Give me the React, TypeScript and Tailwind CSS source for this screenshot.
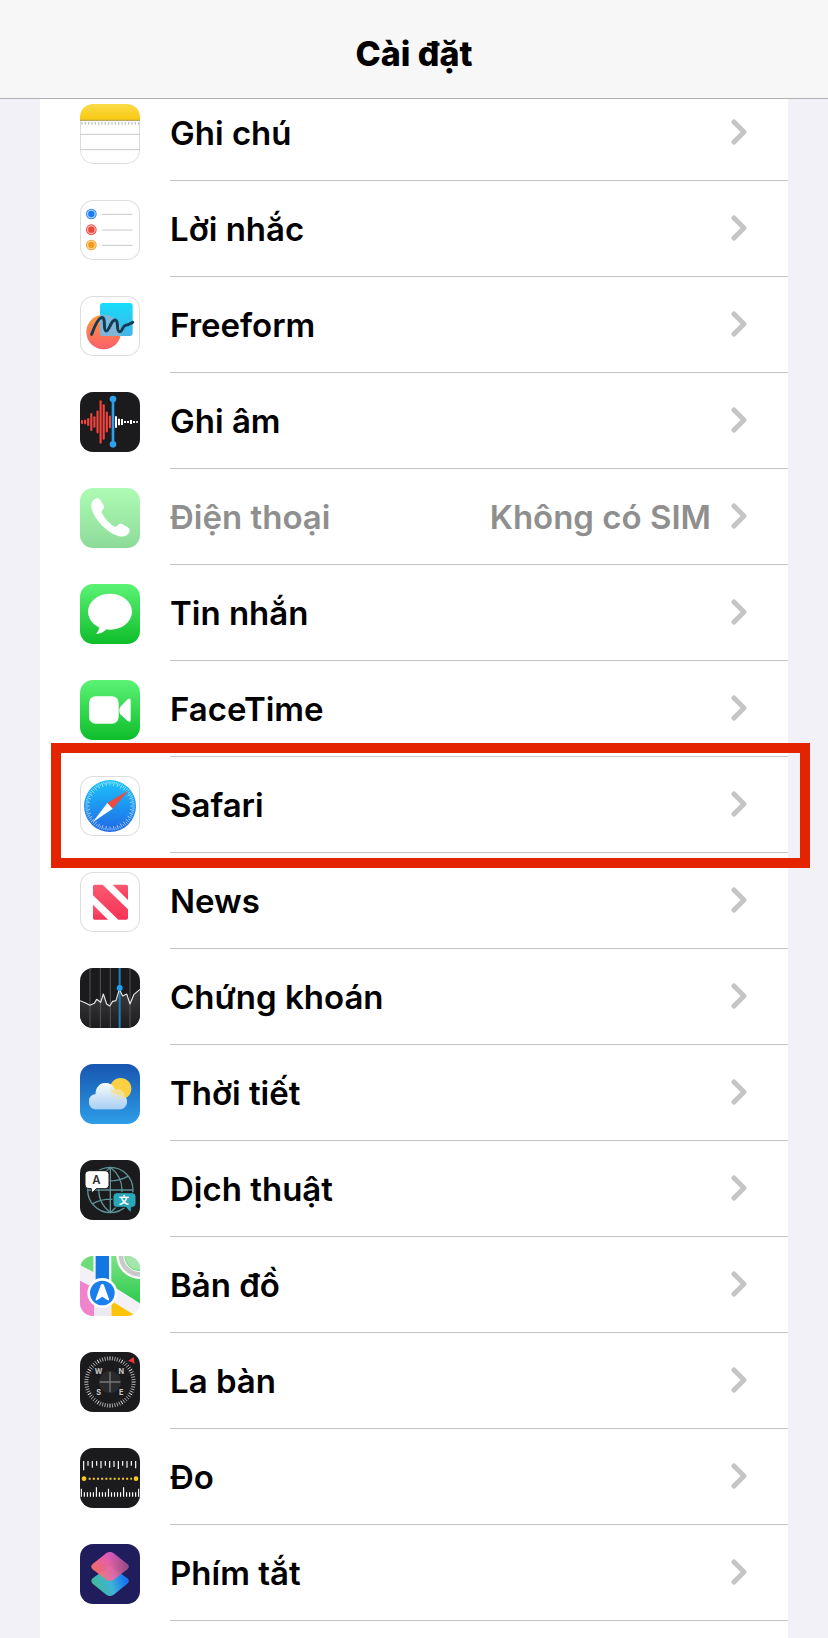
import type { ReactNode } from "react";

function Tile({ children, outlined = false }: { children: ReactNode; outlined?: boolean }) {
  return (
    <svg
      viewBox="0 0 180 180"
      aria-hidden="true"
      className={
        outlined
          ? "mt-0.5 size-[60px] shrink-0 rounded-[13px] bg-white shadow-[inset_0_0_0_1px_#dedede]"
          : "mt-0.5 size-[60px] shrink-0 rounded-[13px]"
      }
    >
      {children}
    </svg>
  );
}

function Gradient({ id, from, to }: { id: string; from: string; to: string }) {
  return (
    <linearGradient id={id} x1="0" y1="0" x2="0" y2="1">
      <stop offset="0" stopColor={from} />
      <stop offset="1" stopColor={to} />
    </linearGradient>
  );
}

const range = (n: number) => Array.from({ length: n }, (_, i) => i);

function NotesIcon() {
  return (
    <Tile>
      <defs><Gradient id="notes" from="#fbdb4a" to="#f8c90f" /></defs>
      <rect x="1.5" y="1.5" width="177" height="177" rx="38" fill="#fff" stroke="#dcdcdc" strokeWidth="3" />
      <path d="M0 48V38C0 14 14 0 38 0h104c24 0 38 14 38 38v10z" fill="url(#notes)" />
      <path d="M0 49h180" stroke="#bda95c" strokeWidth="4" />
      <path d="M4 58h176" stroke="#c4c4c4" strokeWidth="8" strokeDasharray="4 6" />
      <path d="M0 91h180M0 137h180" stroke="#c8c8c8" strokeWidth="3" />
    </Tile>
  );
}

function RemindersIcon() {
  const items = [
    { y: 42, c: "#1b7df3", l: "#a9d0fb" },
    { y: 89, c: "#ee453f", l: "#f9b5b2" },
    { y: 135, c: "#f59a1d", l: "#fbd6a1" },
  ];
  return (
    <Tile outlined>
      {items.map((i) => (
        <g key={i.y}>
          <circle cx="34" cy={i.y} r="16" fill={i.c} />
          <circle cx="34" cy={i.y} r="11.5" fill="none" stroke={i.l} strokeWidth="4" />
          <path d={`M66 ${i.y + 1}h92`} stroke="#c9c9c9" strokeWidth="3" />
        </g>
      ))}
    </Tile>
  );
}

function FreeformIcon() {
  return (
    <Tile outlined>
      <defs>
        <Gradient id="ffc" from="#ff9a3c" to="#fa5f6c" />
        <Gradient id="ffs" from="#17dcfb" to="#43b4e6" />
        <clipPath id="ffclip"><rect x="60" y="21" width="98" height="99" rx="9" /></clipPath>
      </defs>
      <circle cx="71" cy="108" r="52" fill="url(#ffc)" />
      <rect x="60" y="21" width="98" height="99" rx="9" fill="url(#ffs)" />
      <circle cx="71" cy="108" r="52" fill="#8fb4d3" opacity=".8" clipPath="url(#ffclip)" />
      <path
        d="M35 115C42 96 52 68 64 65C80 62 68 104 78 105C88 106 92 73 105 72C118 72 107 107 119 107C127 107 128 90 136 88C144 88 150 84 158 79"
        fill="none" stroke="#123c56" strokeWidth="9" strokeLinecap="round" strokeLinejoin="round"
      />
    </Tile>
  );
}

function VoiceIcon() {
  const red = [3, 4, 9, 24, 14, 31, 62, 50, 28, 16];
  const white = [17, 10, 9, 3, 3, 6, 3, 2];
  return (
    <Tile>
      <rect width="180" height="180" fill="#1b1b1d" />
      {red.map((h, i) => (
        <path key={i} d={`M${6 + i * 9.3} ${90 - h}v${h * 2}`} stroke="#f0443c" strokeWidth="6.500" strokeLinecap="round" />
      ))}
      {white.map((h, i) => (
        <path key={i} d={`M${108 + i * 9} ${90 - h}v${h * 2}`} stroke="#fff" strokeWidth="6" />
      ))}
      <path d="M99 22v134" stroke="#2f9fe8" strokeWidth="8" />
      <circle cx="99" cy="21" r="10" fill="#2f9fe8" />
      <circle cx="99" cy="157" r="10" fill="#2f9fe8" />
    </Tile>
  );
}

function PhoneIcon() {
  return (
    <Tile>
      <defs><Gradient id="phone" from="#aefbb4" to="#8ddb99" /></defs>
      <rect width="180" height="180" fill="url(#phone)" />
      <path
        d="M46 32C34 38 31 51 36 66C46 98 82 132 108 142C126 149 142 146 148 132C151 125 148 121 142 117L128 109C121 106 117 108 112 113C108 117 104 116 99 113C86 105 74 91 66 76C64 71 65 68 68 65C73 60 73 56 70 50L61 36C57 30 51 30 46 32Z"
        fill="#fff"
      />
    </Tile>
  );
}

function MessagesIcon() {
  return (
    <Tile>
      <defs><Gradient id="msg" from="#5cf375" to="#0ebd2a" /></defs>
      <rect width="180" height="180" fill="url(#msg)" />
      <ellipse cx="90" cy="83" rx="66" ry="54" fill="#fff" />
      <path d="M54 120C60 132 56 142 48 149C62 149 73 143 80 134Z" fill="#fff" />
    </Tile>
  );
}

function FaceTimeIcon() {
  return (
    <Tile>
      <defs><Gradient id="ft" from="#5cf375" to="#0ebd2a" /></defs>
      <rect width="180" height="180" fill="url(#ft)" />
      <rect x="27" y="49" width="89" height="82" rx="20" fill="#fff" />
      <path d="M121 80L143 58Q152 52 152 62V120Q152 129 143 123L121 103Q118 99 118 91.500Q118 84 121 80Z" fill="#fff" />
    </Tile>
  );
}

function SafariIcon() {
  return (
    <Tile outlined>
      <defs><Gradient id="saf" from="#1cc3fb" to="#1f68e6" /></defs>
      <circle cx="90" cy="90" r="78" fill="url(#saf)" />
      {range(72).map((i) => (
        <path
          key={i}
          d={i % 2 ? "M90 16v7" : "M90 16v13"}
          stroke="#fff" strokeOpacity=".8" strokeWidth="2"
          transform={`rotate(${i * 5} 90 90)`}
        />
      ))}
      <path d="M146 43L82 81L98 98Z" fill="#ef4a3f" />
      <path d="M38 139L82 81L98 98Z" fill="#fff" />
    </Tile>
  );
}

function NewsIcon() {
  return (
    <Tile outlined>
      <defs><Gradient id="news" from="#fa5a72" to="#f63256" /></defs>
      <g fill="url(#news)">
        <path d="M44 38H68L144 112V138Q144 143 139 143H115L39 70V43Q39 38 44 38Z" />
        <path d="M98 38H139Q144 38 144 43V84Z" />
        <path d="M39 98L84 143H44Q39 143 39 138Z" />
      </g>
    </Tile>
  );
}

function StocksIcon() {
  return (
    <Tile>
      <defs><Gradient id="stk" from="#3d3d40" to="#1c1c1e" /></defs>
      <rect width="180" height="180" fill="#1b1b1d" />
      <path d="M0 98L15 104L30 112L43 106L50 94L62 103L70 78L80 108L89 114L98 100L108 98L118 64L128 84L140 78L150 108L162 79L180 64V180H0Z" fill="url(#stk)" />
      <path d="M30 0v180M61 0v180M91 0v180M150 0v180" stroke="#626264" strokeWidth="2.500" />
      <path d="M119 0v180" stroke="#1f7fb8" strokeWidth="6" />
      <path
        d="M0 98L15 104L30 112L43 106L50 94L62 103L70 78L80 108L89 114L98 100L108 98L118 64L128 84L140 78L150 108L162 79L180 64"
        fill="none" stroke="#e4e4e4" strokeWidth="3.500" strokeLinejoin="round"
      />
      <circle cx="119" cy="60" r="9" fill="#1ba0f2" />
    </Tile>
  );
}

const CLOUD =
  "M50 136C35 136 27 126 27 113C27 100 36 91 47 91C46 71 60 57 76 57C90 57 100 65 105 77C122 74 135 84 134 98C140 102 142 108 141 115C140 128 131 136 120 136Z";

function WeatherIcon() {
  return (
    <Tile>
      <defs>
        <Gradient id="sky" from="#1755b0" to="#2e9ee8" />
        <linearGradient id="cloud" gradientUnits="userSpaceOnUse" x1="90" y1="57" x2="90" y2="136">
          <stop offset="0" stopColor="#f8fbff" />
          <stop offset="1" stopColor="#a8cff2" />
        </linearGradient>
        <clipPath id="cloudclip"><path d={CLOUD} /></clipPath>
      </defs>
      <rect width="180" height="180" fill="url(#sky)" />
      <circle cx="122" cy="74" r="32" fill="#fbd043" />
      <path d={CLOUD} fill="url(#cloud)" />
      <circle cx="122" cy="74" r="32" fill="#f9dd80" opacity=".85" clipPath="url(#cloudclip)" />
      <path d="M50 136C35 136 27 126 27 113C27 100 36 91 47 91C46 71 60 57 76 57C90 57 100 65 105 77Q96 79 92 84Q124 92 134 104Q142 126 120 136Z" fill="url(#cloud)" opacity=".7" />
    </Tile>
  );
}

function TranslateIcon() {
  return (
    <Tile>
      <rect width="180" height="180" fill="#1b1b1d" />
      <g fill="none" stroke="#5d9297" strokeWidth="4">
        <circle cx="91" cy="90" r="68" />
        <path d="M91 22v136M23 90h136M91 22C66 42 56 66 56 90S66 138 91 158M91 22C116 42 126 66 126 90S116 138 91 158M38 49Q91 76 144 49M38 131Q91 104 144 131" />
      </g>
      <path d="M27 32H76Q87 32 87 43V76Q87 86 76 86H49Q43 94 36 98Q34 92 34 86H27Q15 86 15 75V43Q15 32 27 32Z" fill="#fff" stroke="#1b1b1d" strokeWidth="3" />
      <text x="49" y="71" textAnchor="middle" fontFamily="Inter, sans-serif" fontWeight="600" fontSize="34" fill="#303030">A</text>
      <path d="M110 98H157Q168 98 168 109V132Q168 142 157 142H154V158Q144 152 138 142H110Q99 142 99 132V109Q99 98 110 98Z" fill="#2aa7b9" stroke="#1b1b1d" strokeWidth="3" />
      <text x="132" y="132" textAnchor="middle" fontFamily="'Noto Sans CJK SC', sans-serif" fontWeight="700" fontSize="31" fill="#fff">文</text>
    </Tile>
  );
}

function MapsIcon() {
  return (
    <Tile>
      <defs><Gradient id="mapg" from="#7de184" to="#2ccb4d" /></defs>
      <rect width="180" height="180" fill="#f3f1f5" />
      <path d="M0 0H40V48L0 27Z" fill="#6edc79" />
      <path d="M94 0H180V142L94 88Z" fill="url(#mapg)" />
      <circle cx="180" cy="-2" r="59" fill="none" stroke="#fff" strokeWidth="24" />
      <circle cx="180" cy="-2" r="57" fill="none" stroke="#c9c9cb" strokeWidth="14" />
      <circle cx="180" cy="-2" r="44" fill="#a5e6ad" />
      <path d="M0 74L43 96V180H0Z" fill="#f084cc" />
      <path d="M94 134L168 180H94Z" fill="#fcc30b" />
      <rect x="47" y="0" width="40" height="90" fill="#1277e0" />
      <path d="M43 140h51v40H43z" fill="#eceaf0" />
      <circle cx="67" cy="111" r="45" fill="#fff" />
      <circle cx="67" cy="111" r="37" fill="#1a7fee" />
      <path d="M67 83Q70 83 72 88L87 129Q89 136 82 132L67 122L52 132Q45 136 47 129L62 88Q64 83 67 83Z" fill="#fff" />
    </Tile>
  );
}

function CompassIcon() {
  const letters = [
    { t: "W", x: 56, y: 65 },
    { t: "N", x: 124, y: 65 },
    { t: "S", x: 56, y: 129 },
    { t: "E", x: 124, y: 129 },
  ];
  return (
    <Tile>
      <rect width="180" height="180" fill="#1b1b1d" />
      {range(60).map((i) => (
        <path key={i} d="M90 13v12" stroke="#fff" strokeOpacity={i % 5 ? 0.7 : 1} strokeWidth="2.500" transform={`rotate(${i * 6} 90 90)`} />
      ))}
      <circle cx="90" cy="90" r="33" fill="#2a2a2c" />
      <path d="M90 59v62M59 90h62" stroke="#77777a" strokeWidth="4" />
      {letters.map((l) => (
        <text key={l.t} x={l.x} y={l.y} textAnchor="middle" fontFamily="Inter, sans-serif" fontWeight="700" fontSize="22" fill="#c9c9c9">{l.t}</text>
      ))}
      <path d="M161 15L164 36L155 30L144 27Z" fill="#f23a35" />
    </Tile>
  );
}

function MeasureIcon() {
  const top = [28, 14, 20, 14, 22, 14, 20, 18, 24, 14, 20, 14, 22];
  const bottom = [24, 13, 13, 13, 13, 28, 13, 13, 13, 24, 13, 13, 13, 13, 28, 13, 13, 13, 13, 24];
  return (
    <Tile>
      <rect width="180" height="180" fill="#1b1b1d" />
      {top.map((h, i) => (
        <path key={i} d={`M${11 + i * 13} 39v${h}`} stroke="#fff" strokeWidth="3.500" />
      ))}
      <path d="M26 92h130" stroke="#f8ca20" strokeWidth="6" strokeDasharray="6 6.500" />
      <circle cx="12" cy="92" r="7" fill="#f8ca20" />
      <circle cx="168" cy="92" r="7" fill="#f8ca20" />
      {bottom.map((h, i) => (
        <path key={i} d={`M${4 + i * 9.05} ${146 - h}v${h}`} stroke="#fff" strokeWidth="3.500" />
      ))}
    </Tile>
  );
}

function ShortcutsIcon() {
  return (
    <Tile>
      <defs>
        <linearGradient id="sct" x1=".1" y1=".6" x2=".9" y2=".4">
          <stop offset="0" stopColor="#fb6a6c" />
          <stop offset=".5" stopColor="#e45fb4" />
          <stop offset="1" stopColor="#7a3f8f" />
        </linearGradient>
        <linearGradient id="scb" x1=".1" y1=".6" x2=".9" y2=".4">
          <stop offset="0" stopColor="#42b8a0" />
          <stop offset=".5" stopColor="#3fb3d6" />
          <stop offset="1" stopColor="#1674f5" />
        </linearGradient>
        <linearGradient id="scl" x1="0" y1="0" x2="0" y2="1">
          <stop offset="0" stopColor="#ef57dc" stopOpacity=".8" />
          <stop offset=".6" stopColor="#ff7a68" stopOpacity=".4" />
          <stop offset="1" stopColor="#d98aa5" stopOpacity=".6" />
        </linearGradient>
      </defs>
      <rect width="180" height="180" fill="#1f1d5c" />
      <path d="M81 72Q90 65 99 72L142 103Q151 111 142 119L101 152Q90 160 79 152L38 119Q30 111 38 103Z" fill="url(#scb)" />
      <path d="M79 28Q90 20 101 28L142 60Q151 68 142 76L101 107Q90 114 79 107L38 76Q30 68 38 60Z" fill="url(#sct)" opacity=".93" />
      <path d="M79 28Q90 20 101 28L142 60Q151 68 142 76L101 107Q90 114 79 107L38 76Q30 68 38 60Z" fill="url(#scl)" opacity=".6" />
    </Tile>
  );
}

function Chevron() {
  return (
    <svg viewBox="0 0 16 26" aria-hidden="true" className="mb-0.5 h-[26px] w-4 shrink-0">
      <path d="M3 3L13 13L3 23" fill="none" stroke="#c5c5c7" strokeWidth="5" strokeLinecap="round" strokeLinejoin="round" />
    </svg>
  );
}

type Item = { label: string; icon: ReactNode; value?: string; highlighted?: boolean };

const items: Item[] = [
  { label: "Ghi chú", icon: <NotesIcon /> },
  { label: "Lời nhắc", icon: <RemindersIcon /> },
  { label: "Freeform", icon: <FreeformIcon /> },
  { label: "Ghi âm", icon: <VoiceIcon /> },
  { label: "Điện thoại", icon: <PhoneIcon />, value: "Không có SIM" },
  { label: "Tin nhắn", icon: <MessagesIcon /> },
  { label: "FaceTime", icon: <FaceTimeIcon /> },
  { label: "Safari", icon: <SafariIcon />, highlighted: true },
  { label: "News", icon: <NewsIcon /> },
  { label: "Chứng khoán", icon: <StocksIcon /> },
  { label: "Thời tiết", icon: <WeatherIcon /> },
  { label: "Dịch thuật", icon: <TranslateIcon /> },
  { label: "Bản đồ", icon: <MapsIcon /> },
  { label: "La bàn", icon: <CompassIcon /> },
  { label: "Đo", icon: <MeasureIcon /> },
  { label: "Phím tắt", icon: <ShortcutsIcon /> },
];

function Row({ label, icon, value, highlighted }: Item) {
  return (
    <li className="relative">
      <a href="#" className="flex h-24 items-center gap-[30px] pl-10">
        {icon}
        <span className="flex h-full min-w-0 flex-1 items-center border-b border-[#c4c4c6] pr-[41px]">
          <span className={value ? "flex-1 text-[#8f8f8f]" : "flex-1 text-black"}>{label}</span>
          {value && <span className="mr-5 text-[#8f8f8f]">{value}</span>}
          <Chevron />
        </span>
      </a>
      {highlighted && (
        <span className="pointer-events-none absolute -top-3.5 -right-[22px] -bottom-[15px] left-[11px] z-10 border-10 border-[#e42400]" />
      )}
    </li>
  );
}

export default function App() {
  return (
    <div className="flex min-h-screen flex-col bg-[#f2f1f7] font-['Inter',sans-serif]">
      <header className="sticky top-0 z-20 border-b border-[#b1b0b5] bg-[#f7f7f7] pt-[33px] pb-[23px] text-center">
        <h1 className="text-[34px] leading-[42px] font-extrabold text-black">Cài đặt</h1>
      </header>
      <main className="mx-10 -mt-3.5 flex-1 bg-white pb-4">
        <ul className="text-[33px] leading-[42px] font-semibold">
          {items.map((item) => (
            <Row key={item.label} {...item} />
          ))}
        </ul>
      </main>
    </div>
  );
}
